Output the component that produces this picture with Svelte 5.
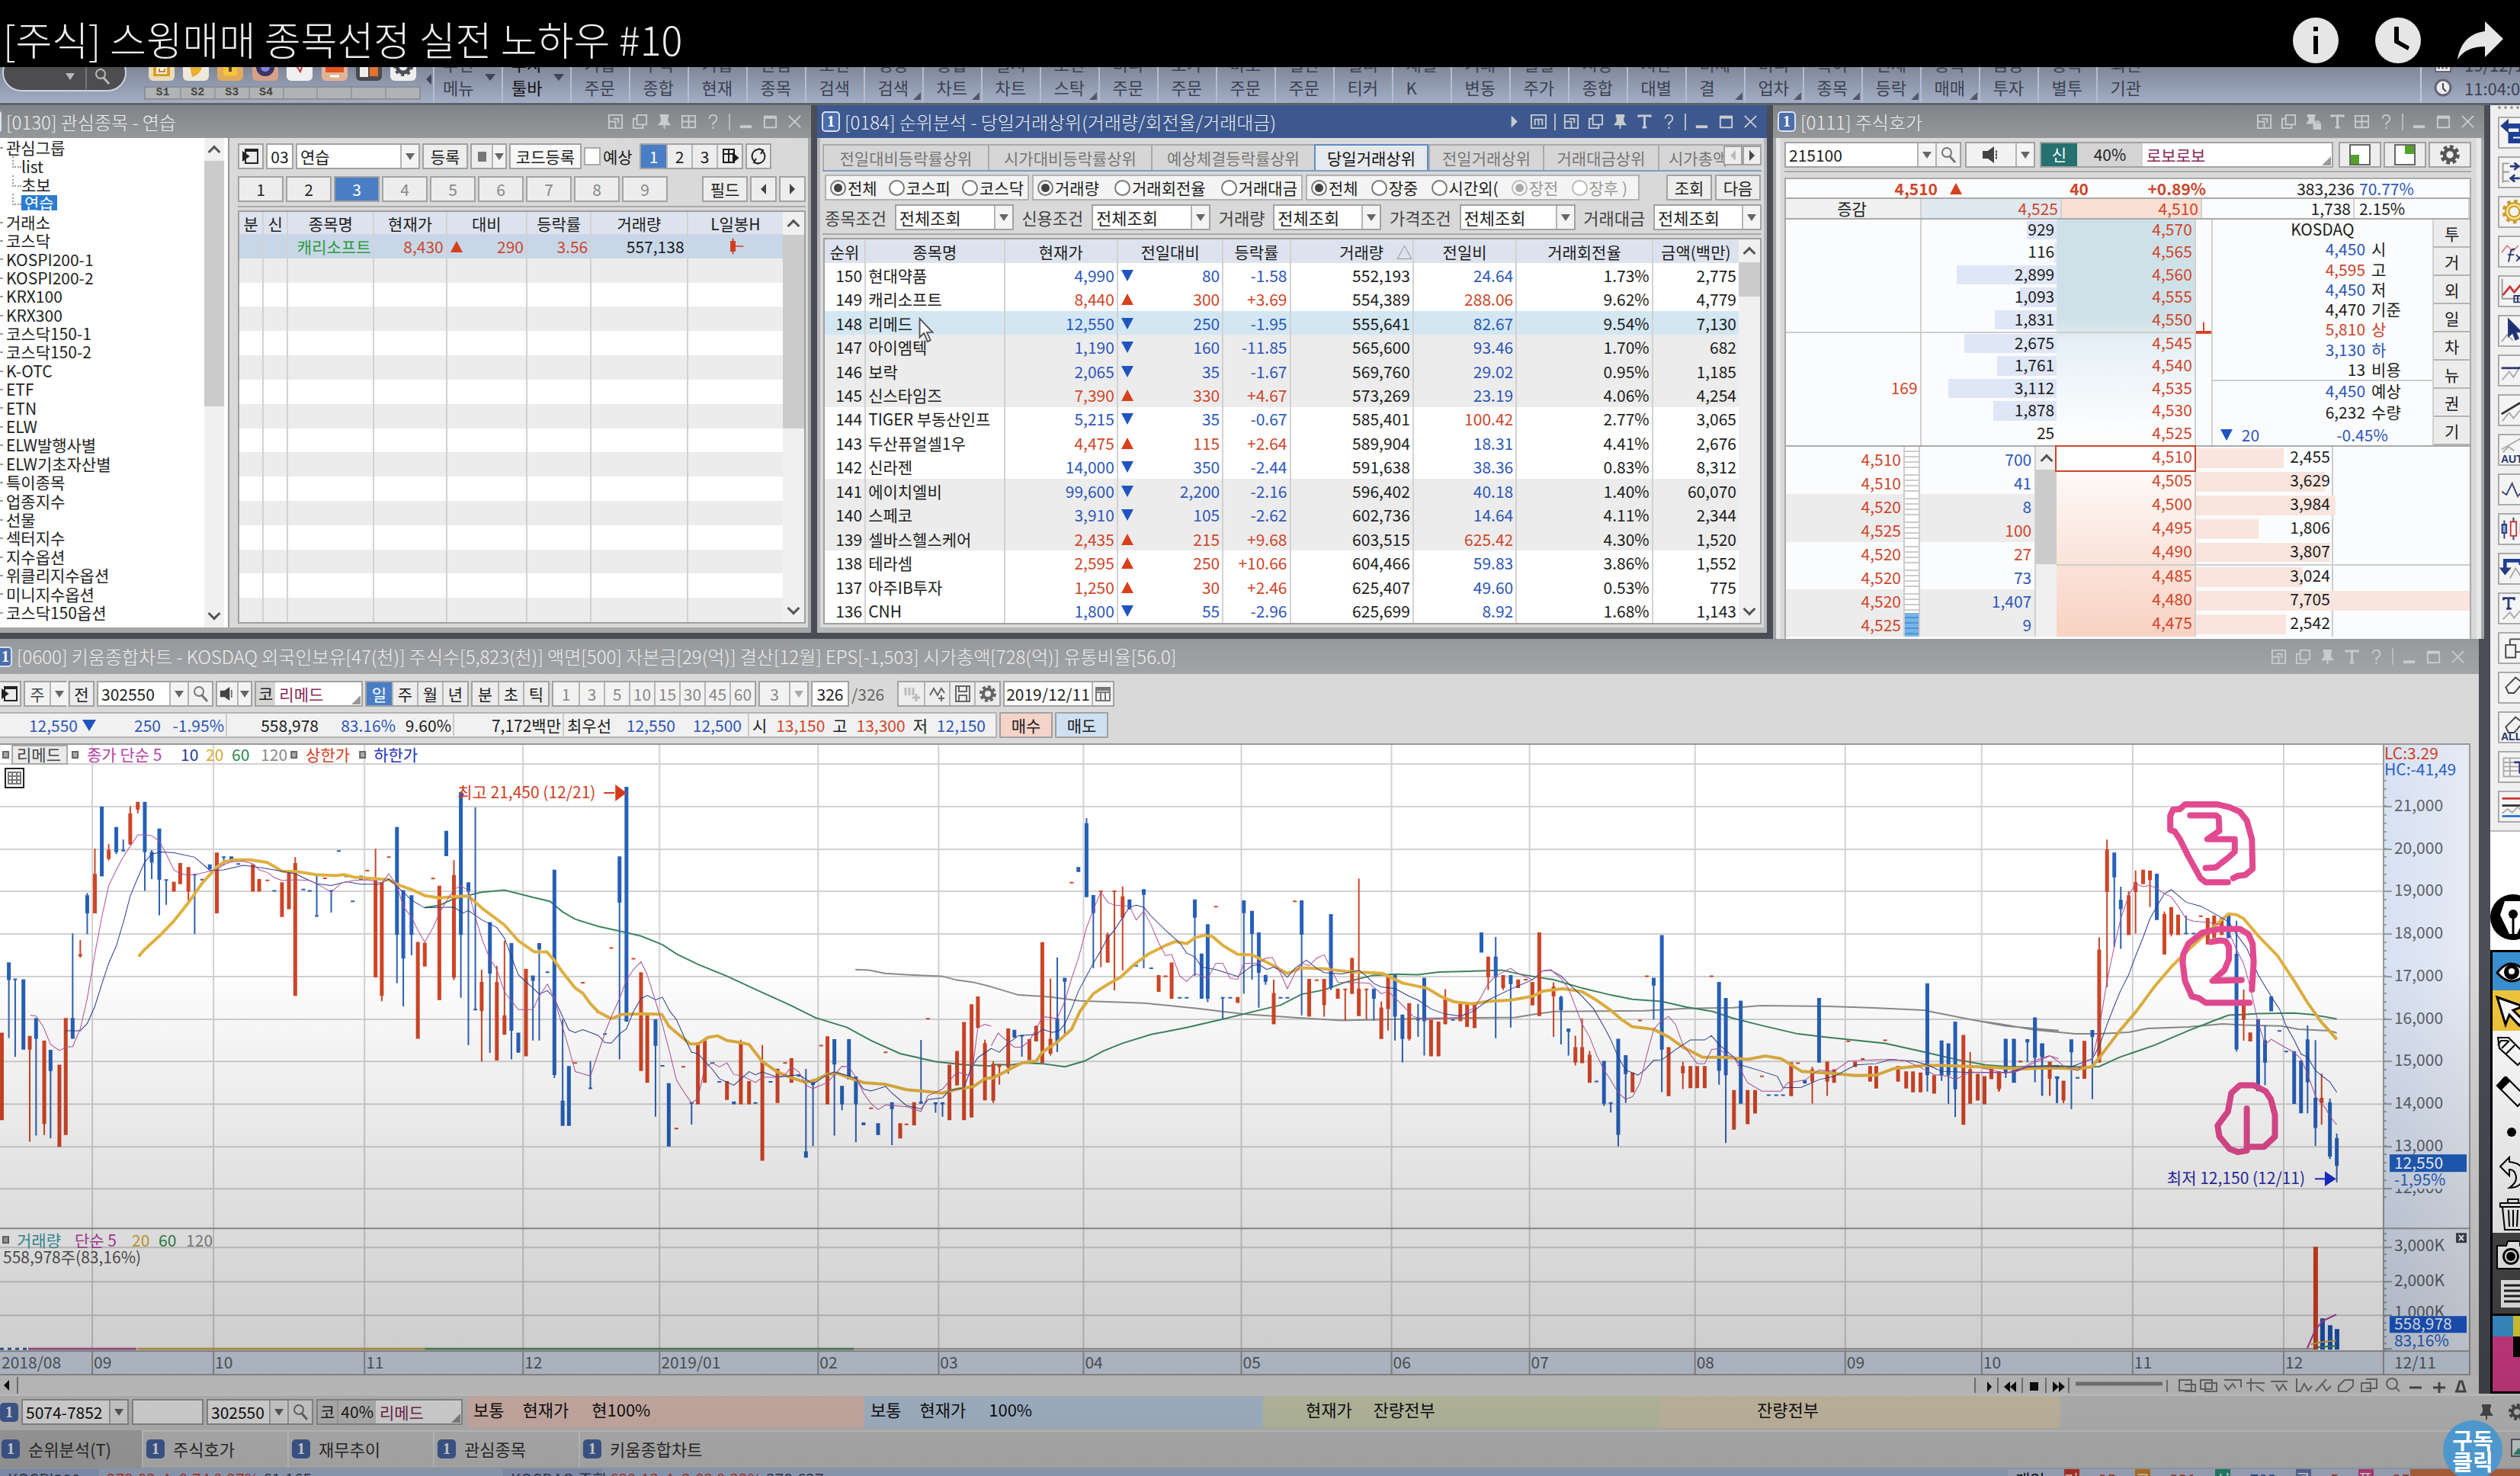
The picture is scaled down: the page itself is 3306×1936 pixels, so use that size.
<script>
  // ---------- quick menu ----------
  const quick = [
    ['기업', '주문'], ['주식', '종합'], ['기업', '현재'], ['관심', '종목'], ['조건', '검색'], ['영상', '검색', 1],
    ['종합', '차트', 1], ['실시', '차트'], ['조건', '스탁', 1], ['미니', '주문'], ['호가', '주문'], ['바로', '주문'],
    ['일반', '주문'], ['멀티', '티커'], ['채널', 'K'], ['거래', '변동'], ['일별', '주가'], ['시장', '종합'],
    ['시간', '대별'], ['미체', '결', 1], ['미니', '업차', 1], ['특이', '종목', 1], ['전체', '등락', 1],
    ['종목', '매매', 1], ['금융', '투자'], ['종목', '별투'], ['외인', '기관']
  ];
  const shortcuts = ['S1', 'S2', 'S3', 'S4', '', '', '', ''];

  // ---------- watch list ----------
  const tree = ['관심그룹', 'list', '초보', '연습', '거래소', '코스닥', 'KOSPI200-1', 'KOSPI200-2', 'KRX100', 'KRX300',
    '코스닥150-1', '코스닥150-2', 'K-OTC', 'ETF', 'ETN', 'ELW', 'ELW발행사별', 'ELW기초자산별', '특이종목', '업종지수',
    '선물', '섹터지수', '지수옵션', '위클리지수옵션', '미니지수옵션', '코스닥150옵션'];
  const blankRows = Array.from({ length: 15 });

  // ---------- volume ranking ----------
  const tabs = ['전일대비등락률상위', '시가대비등락률상위', '예상체결등락률상위', '당일거래상위', '전일거래상위', '거래대금상위', '시가총액'];
  const filters = ['종목조건', '신용조건', '거래량', '가격조건', '거래대금'];
  const ranks = [
    [150, '현대약품', '4,990', '80', '-1.58', '552,193', '24.64', '1.73%', '2,775'],
    [149, '캐리소프트', '8,440', '300', '+3.69', '554,389', '288.06', '9.62%', '4,779'],
    [148, '리메드', '12,550', '250', '-1.95', '555,641', '82.67', '9.54%', '7,130'],
    [147, '아이엠텍', '1,190', '160', '-11.85', '565,600', '93.46', '1.70%', '682'],
    [146, '보락', '2,065', '35', '-1.67', '569,760', '29.02', '0.95%', '1,185'],
    [145, '신스타임즈', '7,390', '330', '+4.67', '573,269', '23.19', '4.06%', '4,254'],
    [144, 'TIGER 부동산인프', '5,215', '35', '-0.67', '585,401', '100.42', '2.77%', '3,065'],
    [143, '두산퓨얼셀1우', '4,475', '115', '+2.64', '589,904', '18.31', '4.41%', '2,676'],
    [142, '신라젠', '14,000', '350', '-2.44', '591,638', '38.36', '0.83%', '8,312'],
    [141, '에이치엘비', '99,600', '2,200', '-2.16', '596,402', '40.18', '1.40%', '60,070'],
    [140, '스페코', '3,910', '105', '-2.62', '602,736', '14.64', '4.11%', '2,344'],
    [139, '셀바스헬스케어', '2,435', '215', '+9.68', '603,515', '625.42', '4.30%', '1,520'],
    [138, '테라셈', '2,595', '250', '+10.66', '604,466', '59.83', '3.86%', '1,552'],
    [137, '아주IB투자', '1,250', '30', '+2.46', '625,407', '49.60', '0.53%', '775'],
    [136, 'CNH', '1,800', '55', '-2.96', '625,699', '8.92', '1.68%', '1,143']
  ];

  // ---------- order book ----------
  const asks = [['929', '4,570', 22], ['116', '4,565', 2], ['2,899', '4,560', 74], ['1,093', '4,555', 27], ['1,831', '4,550', 46],
    ['2,675', '4,545', 68], ['1,761', '4,540', 44], ['3,112', '4,535', 80], ['1,878', '4,530', 47], ['25', '4,525', 0]];
  const bids = [['4,510', '2,455', 32], ['4,505', '3,629', 47], ['4,500', '3,984', 51], ['4,495', '1,806', 23], ['4,490', '3,807', 49],
    ['4,485', '3,024', 39], ['4,480', '7,705', 100], ['4,475', '2,542', 33]];
  const ticks = [['4,510', '700', 'dn'], ['4,510', '41', 'dn'], ['4,520', '8', 'dn'], ['4,525', '100', 'up'], ['4,520', '27', 'up'],
    ['4,520', '73', 'dn'], ['4,520', '1,407', 'dn'], ['4,525', '9', 'dn']];
  const info = [['4,450', '시', 'dn'], ['4,595', '고', 'up'], ['4,450', '저', 'dn'], ['4,470', '기준', ''], ['5,810', '상', 'up'], ['3,130', '하', 'dn'], ['13', '비용', '']];

  // ---------- chart ----------
  // Each segment keeps its own digitised units: position = origin + value / scale.
  const segments = [
    {
      ox: 0, oy: 1010, sx: 1.2062, sy: 2.9037,
      candles: '3 r 1003 1330;14 b 735 797 735 1020;24 b 797 797 797 1092;37 b 800 1062;47 r 1015 1062 1015 1415;57 b 947 1020 947 1392;70 r 1033 1345 1030 1390;80 b 1068 1143 1068 1402;94 r 1125 1432;104 r 947 1387;115 b 947 1020 622 1020;127 r 704 706 647 715;138 b 480 543 468 625;150 r 398 543 300 543;161 b 142 402;172 r 307 335 282 345;184 b 220 310 220 320;195 b 307 307 265 310;206 r 168 280 138 285;218 r 124 148 124 165;229 b 124 310 124 460;240 b 315 350 305 415;252 b 226 415 226 553;263 b 419 419 419 513;275 r 428 460;285 r 357 432;298 r 372 460 372 500;308 b 398 398 398 625;320 b 417;332 b 362 375;343 r 317 543;354 b 332 332 332 362;366 b 332 348;377 b 358;400 r 362 460;410 r 418 460;423 r 420;434 b 460;446 r 430 557;457 r 387 527;467 r 357 857 332 857;480 b 455;490 b 460;501 b 556 556 403 556;514 r 412;524 b 460 460 460 543;536 b 308;548 b 405;558 b 500;571 b 405 415;581 r 383;594 r 418 787 300 787;604 r 430 857 430 880;615 r 332;628 b 220 625 220 812;638 b 460 715 460 900;651 b 480 625 480 705;661 r 657 1020;672 r 660 745;685 r 413;695 r 443 873;706 b 234 325;718 r 403 788 343 800;729 b 87 625 87 867;741 b 430 460 430 1047;752 b 912 912 142 912;762 r 810 915 760 1110;775 b 582 772 582 1077;786 r 810 1103 745 1103;798 r 937 1005 650 1005;809 b 662 990 662 1102;820 b 1003 1073 1003 1077;832 r 760 1087;843 b 785 800 785 1030;853 b 662 680 662 1030;866 b 770;877 b 382 1158 382 1172;890 b 1262 1352 950 1352;900 b 1130 1352;910 r 1115;922 r 810;934 b 1212 1212 1108 1212;946 r 922;957 b 1005;967 r 678;980 b 332 502 332 1102;991 b 67 955;1002 r 718;1014 r 773 1143;1024 r 937 1188;1037 b 952 1047 952 1320;1048 b 1126;1058 b 1195 1430;1070 r 1365;1081 r 1130;1094 b 1268 1268 1268 1350;1104 r 1040 1270;1115 r 1033 1188;1127 b 1115;1138 b 1187;1150 r 1187 1253;1161 b 1265 1270;1172 r 1040 1270 1027 1270;1185 r 1187 1270;1195 b 1268;1206 r 1115 1485 1047 1485;1219 b 1187;1230 r 1140 1265;1242 r 1115;1252 r 1100 1188;1264 b 1165;1275 b 1455 1473 1138 1473;1286 b 1187 1197 1187 1432;1299 r 1049;1309 r 1017 1270;1320 b 1028 1118 1028 1392;1332 b 1205 1270 1205 1295;1343 b 1028 1175;1354 b 1170 1270 1170 1417;1366 b 1345 1350;1378 r 1288;1389 b 1348 1387;1401 r 1075;1411 b 1268 1288 1268 1428;1424 r 1348 1400;1434 r 1349;1446 r 1268 1350;1457 b 1265 1268 1028 1268;1468 r 947;1480 b 1268 1270 1268 1305;1491 b 1268 1270 1268 1320;1502 r 1125 1330;1514 r 1073 1198;1525 r 962 1330;1537 r 895 1320;1547 r 865 980;1558 r 1043 1255 1027 1255',
      ma5: '48,933 57,937 68,975 80,1045 94,1068 104,1055 115,1053 127,985 138,870 150,700 161,560 172,440 184,380 195,330 206,290 218,247 229,246 240,250 252,270 263,320 275,380 285,395 298,400 308,398 320,392 343,378 354,360 366,350 385,347 400,357 410,380 423,390 434,410 446,420 467,418 490,420 510,445 524,465 540,430 560,420 580,418 604,430 615,395 628,440 638,520 651,560 661,610 672,655 685,600 695,545 706,500 718,455 729,440 741,460 752,560 762,640 775,720 786,760 798,845 820,912 843,912 853,860 866,815 877,870 890,980 900,1060 910,1148 934,1165 946,1080 957,1000 967,940 980,870 991,800 1002,760 1014,730 1024,780 1037,880 1048,970 1060,1080 1070,1180 1083,1230 1094,1268 1104,1250 1115,1130 1127,1115 1138,1130 1150,1115 1161,1160 1172,1162 1195,1190 1206,1170 1230,1170 1242,1160 1252,1130 1264,1150 1275,1200 1286,1213 1309,1190 1320,1160 1332,1128 1343,1130 1354,1170 1366,1230 1378,1270 1389,1293 1401,1275 1434,1282 1457,1300 1468,1240 1491,1215 1514,1150 1537,1165 1547,980 1558,968 1568,975',
      ma10: '104,993 127,993 138,965 150,900 161,815 172,735 184,670 195,580 206,480 218,410 229,350 240,320 255,312 275,315 308,332 332,382 354,380 385,363 400,367 434,380 467,395 480,410 501,433 524,440 548,425 571,435 600,435 615,415 638,465 651,495 672,525 718,522 732,545 741,535 762,570 786,600 798,640 809,710 820,780 843,830 853,853 866,840 877,870 890,940 900,990 910,1000 922,988 946,1010 957,1038 967,1040 980,1005 991,985 1002,920 1014,870 1024,858 1037,875 1048,865 1060,920 1070,950 1083,1020 1094,1075 1104,1080 1127,1140 1138,1175 1161,1200 1185,1148 1195,1160 1206,1150 1230,1170 1264,1160 1286,1195 1309,1160 1320,1150 1343,1165 1354,1175 1366,1215 1378,1222 1401,1205 1411,1230 1434,1278 1457,1290 1468,1255 1491,1248 1502,1220 1525,1210 1537,1130 1547,1095 1568,1060',
      ma20: '219,710 228,685 252,632 275,575 298,505 320,430 343,370 354,350 370,342 395,342 423,352 446,385 470,387 500,398 530,402 545,398 560,408 600,415 615,418 628,435 651,455 672,478 695,487 720,482 741,480 762,525 798,590 820,650 845,692 865,692 877,725 890,770 910,830 922,850 934,890 946,920 967,947 985,930 1020,928 1047,930 1058,975 1080,1020 1092,1043 1104,1043 1120,1018 1135,1012 1150,1030 1170,1037 1185,1045 1206,1110 1230,1150 1250,1170 1275,1190 1290,1180 1309,1158 1325,1155 1343,1172 1366,1190 1401,1197 1434,1217 1470,1225 1491,1230 1514,1215 1540,1205 1558,1175 1568,1172',
      ma60: '672,523 695,515 718,490 762,465 798,457 843,485 870,500 890,540 910,568 946,595 980,613 1014,632 1048,665 1070,700 1104,740 1150,785 1206,847 1250,895 1290,943 1340,980 1378,1030 1424,1080 1480,1110 1525,1122 1568,1127',
      ma120: '1353,760 1375,762 1400,774 1440,780 1490,785 1514,800 1540,808 1568,825'
    },
    {
      ox: 1300, oy: 1050, sx: 1.12, sy: 3,
      candles: '3 r 1040 1178 1025 1190;12 r 1040 1045 1040 1118;25 r 900 1047 900 1075;34 b 905 930;45 b 925 925 925 1008;56 r 942 1018;66 r 890 945 885 945;75 r 560 1030;87 r 940 993 700 1003;97 b 860 945 617 990;108 b 700 710 700 925;118 r 323;128 b 265 278;140 b 92 377 70 377;150 b 375 440 375 660;161 r 357 357 357 655;171 r 530 635 520 635;181 r 357 357 357 747;193 r 380 458 338 668;203 b 392 425;213 b 650;224 b 352 368 352 660;235 b 660;246 r 690 750;256 r 691;265 r 640 777;277 b 776;287 b 776;299 b 392 458 392 690;309 b 605 777;318 b 490 777 490 793;330 r 418;340 b 776 776 776 860;351 b 776;362 r 776 793;371 b 396 440 396 760;383 b 437 522 437 705;393 b 522 675 522 815;403 b 690 710 685 725;415 r 760 877 705 877;425 b 776;435 b 776;446 r 397;456 b 396 525 396 845;467 r 705 847;478 r 707;489 r 705 802 705 850;499 b 450 735 450 745;509 r 743 777;520 r 743 743 743 865;530 r 622 758;540 r 743 845 307 845;551 r 743 743 743 862;562 b 743 777 743 865;573 r 817 935 790 935;583 r 690 817 690 905;593 b 690 847 690 945;604 b 845 935 845 1030;614 r 800 935 800 945;627 b 862 862 800 930;636 b 700 865 700 1003;646 r 865 1003;657 r 873 1003;667 r 785 877 742 877;678 b 863;689 r 800 865;699 r 805 888;710 r 805 892;720 b 522 595;730 r 617 692 617 745;741 b 617 692 537 935;752 r 690 735 690 745;763 b 690 720 690 893;774 r 707 735;785 r 705;795 r 717 803;805 r 522 845;826 r 735 768 715 930;837 b 775 822 768 960;848 b 900 907 900 1003;858 r 973 1028 925 1042;868 r 973 1030 857 1030;879 r 1003 1107 985 1107;889 b 1105;900 b 1027 1190 1027 1202;910 b 1190 1190 1190 1227;921 b 940 1312 940 1360;932 b 1005 1073 1005 1190;942 r 1073 1145;953 r 865;963 r 691;973 b 700 725 700 862;985 b 532 977 532 1147;995 r 973 1160;1016 r 1047 1070 1027 1135;1027 r 1047 1128;1037 r 1047 1128;1048 r 1047 1128;1058 r 691;1069 b 717 1060 717 1118;1079 b 780 1077 780 1347;1091 r 1142 1292;1101 b 790 1190;1111 r 1142 1270;1122 r 1142 1228;1132 r 1085;1142 b 1159;1153 b 1159;1163 b 1159;1175 r 1032 1160;1185 r 1033;1195 b 1103 1110;1206 r 1060 1103 1047 1192;1216 b 780 1028;1228 r 1030 1103 1027 1162;1238 r 1060 1107;1248 b 1078;1259 r 947;1269 r 1030 1045;1280 r 1017;1291 r 1047 1103;1300 r 1047 1130;1313 r 943;1332 r 1047 1103;1344 r 1068 1130;1354 r 1068 1145;1365 r 1073 1145;1375 b 722 1077 722 1145;1385 r 1083 1150;1396 b 947 1077 947 1103;1406 b 958 1078 958 1193;1416 b 873 1133 873 1245;1428 r 925 1272;1438 r 1060 1190 990 1190;1449 r 1078 1177;1459 r 1087 1192;1469 r 1060 1093;1480 r 1070 1132 1070 1145;1490 b 940 1070;1502 b 940 1107;1512 r 1027;1522 b 942 945 942 1030;1533 b 857 1008 857 1108;1544 b 958 1007 958 1162;1555 r 1030 1062 1030 1162;1566 b 1088 1092 1088 1190',
      ma5: '0,965 10,915 25,950 34,970 45,970 56,945 66,900 75,850 97,857 108,790 118,700 128,620 140,500 150,430 161,360 171,400 181,412 203,415 213,470 224,435 235,490 246,560 256,610 265,605 277,690 287,712 299,680 318,700 330,640 340,640 351,700 362,703 371,640 393,640 403,620 413,618 425,680 435,740 446,680 456,640 467,650 478,620 489,607 499,660 509,715 555,718 573,760 583,750 604,805 620,850 640,862 690,853 699,830 710,815 720,770 730,720 741,690 763,660 774,680 795,705 810,670 822,665 837,700 848,740 858,810 868,880 879,930 889,1000 900,1060 910,1100 921,1150 932,1175 942,1165 953,1110 963,1000 973,900 985,865 995,850 1005,880 1016,960 1027,1000 1037,1035 1048,1035 1058,980 1069,975 1079,1000 1091,1010 1101,1060 1111,1110 1132,1143 1160,1143 1170,1110 1195,1100 1216,1060 1238,1065 1259,1025 1291,1020 1325,1018 1344,1025 1365,1050 1385,1078 1406,1085 1416,1098 1438,1068 1480,1070 1502,1070 1512,1060 1533,1030 1555,1005 1568,1015',
      ma10: '0,975 12,990 25,955 40,925 66,920 75,900 90,912 100,905 108,880 118,820 128,750 140,690 150,640 161,590 171,540 181,510 193,460 203,420 213,412 224,420 235,455 256,510 277,560 287,600 299,615 309,655 330,665 362,692 383,650 393,645 405,665 415,655 425,670 435,695 446,660 463,628 478,660 489,677 515,682 540,668 551,690 562,720 573,733 593,740 614,770 627,785 646,820 667,840 689,848 699,840 710,825 730,785 763,742 795,705 810,670 822,668 837,690 848,720 868,770 885,820 900,890 910,940 921,1010 932,1060 950,1080 960,1060 973,1022 985,1020 1005,980 1027,942 1048,942 1058,925 1069,960 1091,1010 1101,1040 1132,1065 1155,1085 1163,1130 1190,1128 1216,1098 1238,1085 1270,1040 1300,1035 1320,1020 1355,1025 1375,1040 1396,1065 1438,1070 1500,1070 1522,1048 1568,1045',
      ma20: '0,1095 25,1060 45,1032 66,1025 75,990 97,950 118,900 130,830 150,760 170,725 190,695 210,645 230,605 256,570 270,555 287,563 299,540 313,530 325,535 340,570 362,605 383,607 400,630 415,650 435,680 456,658 489,662 520,672 575,680 604,718 640,738 660,770 680,792 705,800 730,790 763,785 795,770 810,750 840,740 868,752 889,785 910,825 925,860 942,890 973,900 995,930 1016,970 1045,1010 1075,1010 1111,1018 1137,1005 1160,1015 1190,1065 1230,1072 1270,1082 1300,1080 1325,1055 1370,1042 1396,1042 1450,1047 1500,1053 1568,1052',
      ma60: '0,1038 30,1040 50,1032 75,1035 108,1047 137,1025 165,985 193,955 235,920 287,893 345,857 393,825 425,805 456,762 489,745 520,715 560,688 593,683 627,685 657,675 700,672 750,667 780,685 826,705 868,738 910,765 942,782 985,790 1020,812 1060,830 1090,857 1132,885 1185,918 1230,932 1313,955 1375,992 1420,1020 1460,1040 1500,1048 1568,1043',
      ma120: '0,733 40,765 85,772 130,788 225,797 300,817 370,840 450,855 515,865 555,863 640,857 770,853 800,840 826,830 960,827 1020,818 1090,815 1130,807 1230,810 1290,815 1370,825 1430,857 1490,887 1568,905'
    },
    {
      ox: 2600, oy: 960, sx: 2.221, sy: 2.45,
      candles: '6 r 1110 1192;26 r 1083 1112;49 r 1093 1143 1093 1155;68 b 990 1078 990 1112;92 b 990 1125;110 r 1059;131 b 990 995 990 1060;153 b 920 1045 920 1125;173 b 1003 1040 1003 1168;196 r 1062 1112 1062 1168;216 b 1110 1110 1110 1193;236 r 1123 1182 1123 1193;259 b 990 1027 990 1212;277 b 1111;297 r 995 1112;320 b 960 978 960 1180;340 r 702 1060 660 1060;363 r 380 512 346 820;384 b 390 465 390 690;403 b 542 567 497 697;426 r 527 650 512 650;446 r 485 512 445 647;468 r 445 487;488 r 448 473 445 563;508 b 458 602;530 r 588 713 577 713;550 r 565 647 565 657;570 r 590 650;593 b 648 648 590 648;615 b 648;636 r 592;656 r 600 680;675 r 592 660;697 r 600 650;717 b 590 660;740 b 715 1018 607 1027;761 r 878 923 828 992;780 r 968 992;803 b 925 1152;823 b 993 1060 943 1135;841 b 852 895;865 b 961;885 b 1027;908 b 1028 1193;928 b 1058 1223;947 b 990 1123 943 1225;970 b 1178 1270 990 1330;988 r 1178 1190 1098 1262;1012 b 1192 1362 1178 1372;1032 b 1307 1392 1290 1447',
      ma5: '0,1080 60,1095 100,1090 131,1070 153,1055 196,1040 216,1055 236,1073 277,1088 297,1060 320,1050 335,980 345,920 363,800 384,690 403,600 426,525 446,487 468,497 488,493 508,503 530,520 550,530 570,560 593,600 615,608 656,612 697,620 717,640 740,700 761,745 780,820 800,920 823,1005 841,987 865,1003 908,1030 928,1050 947,1100 970,1170 1000,1210 1012,1235 1032,1262',
      ma10: '0,1095 80,1093 131,1075 196,1075 260,1075 320,1050 340,1010 363,940 384,880 403,830 426,780 446,720 468,660 488,600 508,560 530,520 550,507 593,547 636,560 675,583 717,610 740,650 770,695 803,780 841,850 865,890 885,945 908,990 928,1035 947,1045 970,1088 1012,1125 1032,1158',
      ma20: '0,1075 100,1083 200,1078 280,1083 320,1075 345,1040 400,960 450,895 500,820 550,755 600,700 650,650 690,610 717,585 740,587 761,600 803,655 860,720 908,800 947,870 985,930 1010,960 1032,988',
      ma60: '0,1070 100,1077 200,1072 300,1077 340,1075 400,1045 500,1007 600,960 680,925 717,910 761,908 803,905 908,903 960,908 1032,922',
      ma120: '0,930 60,940 150,957 270,970 340,970 426,965 480,953 600,948 700,938 761,942 870,945 920,955 1010,960 1032,967'
    }
  ];
  const fx = (s, x) => Math.round((s.ox + x / s.sx) * 10) / 10;
  const fy = (s, y) => Math.round((s.oy + y / s.sy) * 10) / 10;
  const line = (key) => segments.map((s) => 'M' + s[key].split(' ').map((p) => {
    const [x, y] = p.split(',').map(Number);
    return fx(s, x) + ' ' + fy(s, y);
  }).join('L')).join('');
  const paths = { r: { body: '', wick: '' }, b: { body: '', wick: '' } };
  for (const s of segments) {
    for (const c of s.candles.split(';')) {
      const [x, k, ...v] = c.split(' ');
      const [top, bot = top, hi, lo] = v.map(Number);
      const px = fx(s, +x);
      paths[k].body += `M${px} ${fy(s, top) - 1}V${fy(s, bot) + 1}`;
      if (hi !== undefined) paths[k].wick += `M${px} ${fy(s, hi)}V${fy(s, lo)}`;
    }
  }
  const pen = (d) => d.split('|').map((part) => 'M' + part.split(' ').map((p) => {
    const [x, y] = p.split(',').map(Number);
    return fx(segments[2], x) + ' ' + fy(segments[2], y);
  }).join('L')).join('');
  const marks = pen('715,483 650,483 635,470 600,400 575,345 560,320 547,315 547,270 555,250 575,248 590,233 685,233 720,242 750,257 770,285 785,345 787,440 765,460 745,462 730,470|605,268 680,268 688,275 690,318 655,345 735,345 735,385 715,405 695,422 680,435 650,437|778,870 650,870 630,855 610,850 590,800 583,740 585,715 600,680 640,645 690,633 750,633 775,650 787,680 790,740 785,828|665,675 690,670 708,672 718,690 718,730 705,765 670,800 755,797|770,1345 745,1350 720,1340 690,1300 685,1265 715,1220 725,1160 750,1135 790,1135 825,1155 840,1180 852,1230 852,1300 820,1333 775,1333|770,1210 770,1335');

  const months = [['2018/08', 0], ['09', 121], ['10', 280], ['11', 478], ['12', 686], ['2019/01', 865], ['02', 1073], ['03', 1231],
    ['04', 1421], ['05', 1628], ['06', 1825], ['07', 2006], ['08', 2223], ['09', 2420], ['10', 2599], ['11', 2797], ['12', 2995]];
  const prices = ['21,000', '20,000', '19,000', '18,000', '17,000', '16,000', '15,000', '14,000', '13,000', '12,000']
    .map((t, i) => [t, Math.round(1058 + i * 55.7)]);
  const minor = Array.from({ length: 50 }, (_, i) => Math.round(1024 + i * 11.14));
  const volMinor = Array.from({ length: 18 }, (_, i) => 1618 + i * 9);

  const periods = ['일', '주', '월', '년'];
  const minutes = ['1', '3', '5', '10', '15', '30', '45', '60'];
  const dock = ['순위분석(T)', '주식호가', '재무추이', '관심종목', '키움종합차트'];
  const sideTools = ['arrow', 'swap', 'gear', 'fx', 'wave', 'cursor', 'hline', 'trend', 'auto', 'zig', 'candle', 'turn', 'text', 'copy', 'erase', 'all', 'memo', 'lines'];
</script>

{#snippet ico(name)}
  <svg class="ico" viewBox="0 0 24 24" fill="none" stroke="currentColor" stroke-width="2" aria-hidden="true">
    {#if name === 'layout'}<path d="M3 3h18v18H3zM3 12h9v9" /><path d="M9 8h7v6" />
    {:else if name === 'copy'}<path d="M8 3h13v13H8zM8 8H3v13h13v-5" />
    {:else if name === 'pin'}<path d="M7 3h10v2h-1v7l3 4H5l3-4V5H7zM12 16v6" fill="currentColor" />
    {:else if name === 'pinlock'}<path d="M5 3h9v2h-1v6l2 3H4l3-4V5H5z" fill="currentColor" /><path d="M13 15h9v7h-9z" fill="currentColor" /><path d="M15 15v-3h5v3" />
    {:else if name === 'T'}<path d="M4 6V4h16v2M12 4v16M9 20h6" stroke-width="3" />
    {:else if name === 'grid'}<path d="M3 4h18v16H3zM12 4v16M3 12h18" />
    {:else if name === 'q'}<path d="M7 8q0-5 5-5t5 5q0 3-5 6v3M12 19v3" />
    {:else if name === 'min'}<path d="M4 19h16" stroke-width="4" />
    {:else if name === 'max'}<path d="M4 5h16v15H4z" /><path d="M4 6h16" stroke-width="4" />
    {:else if name === 'x'}<path d="M4 4l16 16M20 4L4 20" />
    {:else if name === 'm'}<path d="M2 3h20v18H2zM7 17V9h10v8M12 9v8" />
    {:else if name === 'play'}<path d="M9 6l6 6-6 6z" fill="currentColor" />
    {:else if name === 'search'}<circle cx="10" cy="9" r="6" /><path d="M14 14l7 8" stroke-width="3" />
    {:else if name === 'speaker'}<path d="M2 8h6l7-5v18l-7-5H2z" fill="currentColor" /><path d="M18 8h2M18 12h2M18 16h2" stroke-width="3" />
    {:else if name === 'gear'}<circle cx="12" cy="12" r="6" stroke-width="4" /><circle cx="12" cy="12" r="9" stroke-width="4" stroke-dasharray="4 3" />
    {:else if name === 'panel'}<path d="M5 3h16v18H5zM5 5h16" /><path d="M2 7l7 5-7 5z" fill="currentColor" />
    {:else if name === 'gridnext'}<path d="M3 3h14v17H3zM10 3v17M3 9h14" /><path d="M16 9l6 5-6 5z" fill="currentColor" />
    {:else if name === 'refresh'}<path d="M17 4a9 9 0 0 0-11 14M7 20a9 9 0 0 0 11-14M12 2l6 2-3 5M12 22l-6-2 3-5" />
    {:else if name === 'save'}<path d="M3 2h18v20H3zM7 2v7h10V2M7 22v-8h10v8" />
    {:else if name === 'cal'}<path d="M3 4h18v17H3zM3 10h18M9 10v11M15 10v11" /><path d="M3 6h18" stroke-width="4" />
    {:else if name === 'bars'}<path d="M4 4v10M9 4v10M14 4v10M18 12v10M13 17h10" stroke="#bbb" stroke-width="3" />
    {:else if name === 'add'}<path d="M2 14l5-9 5 9 5-9 4 6M17 14v8M13 18h8" />
    {/if}
  </svg>
{/snippet}

{#snippet frameIcons(list)}
  <span class="frame-icons">
    {#each list as n}{#if n === '|'}<i class="bar"></i>{:else}<button aria-label={n}>{@render ico(n)}</button>{/if}{/each}
  </span>
{/snippet}

{#snippet arrow()}<span class="arr" aria-hidden="true"><i></i></span>{/snippet}

<div class="page">
  <header class="video">
    <h1>[주식] 스윙매매 종목선정 실전 노하우 #10</h1>
    <div class="video-actions">
      <button aria-label="정보"><svg viewBox="0 0 60 60"><circle cx="30" cy="30" r="30" fill="#e6e6e6" /><path d="M27 12h6v6h-6zM27 24h6v24h-6z" fill="#000" /></svg></button>
      <button aria-label="나중에 볼 동영상"><svg viewBox="0 0 60 60"><circle cx="30" cy="30" r="30" fill="#e6e6e6" /><path d="M25 12v21l18 10 2-5-14-8V12z" fill="#000" /></svg></button>
      <button aria-label="공유"><svg viewBox="0 0 60 60"><path d="M36 5l24 23-24 24V38C20 38 8 43 0 55 3 38 12 21 36 18z" fill="#e6e6e6" /></svg></button>
    </div>
  </header>

  <nav class="ribbon">
    <div class="pill">{@render arrow()}<i></i>{@render ico('search')}</div>
    <div class="launch">
      <div class="tiles">
        <svg viewBox="0 0 34 34"><rect width="34" height="34" rx="6" fill="#e9dcb8" /><path d="M6 4h22v24H6z" fill="#dc9a2c" /><path d="M10 16h14v9H10z" fill="#fff3cf" /><path d="M14 18v4h7v-4" stroke="#a86" stroke-width="2" fill="none" /></svg>
        <svg viewBox="0 0 34 34"><rect width="34" height="34" rx="6" fill="#efe9da" /><path d="M8 10q14-8 18 2-2 14-14 17z" fill="#e8b02e" /></svg>
        <svg viewBox="0 0 34 34"><rect width="34" height="34" rx="6" fill="#e2ab5c" /><path d="M8 10h18v17H8z" fill="#f3c63c" /><path d="M17 15v7" stroke="#543" stroke-width="4" /></svg>
        <svg viewBox="0 0 34 34"><rect width="34" height="34" rx="6" fill="#d8a088" /><circle cx="17" cy="16" r="12" fill="#3a3566" /><circle cx="17" cy="16" r="6" fill="#8a84d8" /></svg>
        <svg viewBox="0 0 34 34"><rect width="34" height="34" rx="6" fill="#f0f0f0" /><path d="M10 10l8 12 4-12" stroke="#c33" stroke-width="2" fill="none" /></svg>
        <svg viewBox="0 0 34 34"><rect width="34" height="34" rx="6" fill="#e0b498" /><path d="M5 6h24v17H5z" fill="#e2531f" /><path d="M11 28h12" stroke="#fff" stroke-width="3" /></svg>
        <svg viewBox="0 0 34 34"><rect width="34" height="34" rx="6" fill="#4a4a4e" /><path d="M5 15h11v14H5z" fill="#eee" /><path d="M18 6h11v22H18z" fill="#e2722c" /></svg>
        <svg viewBox="0 0 34 34"><rect width="34" height="34" rx="6" fill="#eee" /><circle cx="17" cy="15" r="8" fill="none" stroke="#4a4f5a" stroke-width="5" /><circle cx="17" cy="15" r="11" fill="none" stroke="#4a4f5a" stroke-width="4" stroke-dasharray="4 4" /></svg>
      </div>
      <div class="slots">{#each shortcuts as s}<span>{s}</span>{/each}</div>
    </div>
    <i class="back"></i>
    <a class="qm wide" href="#menu"><span>추천</span><span>메뉴</span><i class="down"></i></a>
    <a class="qm wide strong" href="#bar"><span>투자</span><span>툴바</span><i class="down"></i></a>
    {#each quick as q}
      <a class="qm" href="#quick"><span>{q[0]}</span><span>{q[1]}</span>{#if q[2]}<i class="corner"></i>{/if}</a>
    {/each}
    <div class="clock">
      <span><svg class="ico" viewBox="0 0 24 24"><path d="M2 2h20v20H2z" fill="#eee" stroke="#667" stroke-width="2" /><path d="M5 13h14M5 17h14" stroke="#778" stroke-width="3" stroke-dasharray="3 2" /></svg>19/12/11</span>
      <span><svg class="ico" viewBox="0 0 24 24"><circle cx="12" cy="12" r="10" fill="#eee" stroke="#667" stroke-width="3" /><path d="M12 6v7l4 4" stroke="#445" stroke-width="2" fill="none" /></svg>11:04:00</span>
    </div>
  </nav>

  <div class="desk">
    <main class="work">
      <div class="top-windows">
        <!-- watch list -->
        <section class="win">
          <div class="caption first"><b class="one"></b><span>[0130] 관심종목 - 연습</span>{@render frameIcons(['layout', 'copy', 'pin', 'grid', 'q', '|', 'min', 'max', 'x'])}</div>
          <div class="watch">
            <ul class="tree">
              {#each tree as t, i}<li class:child={i > 0 && i < 4}><a class:sel={i === 3} href="#group">{t}</a></li>{/each}
            </ul>
            <div class="scroll tree-scroll"><b></b></div>
            <div class="watch-main">
              <div class="row tools1">
                <button class="btn" aria-label="패널">{@render ico('panel')}</button>
                <input class="field" aria-label="그룹 번호" value="03" />
                <span class="combo"><select aria-label="그룹"><option>연습</option></select>{@render arrow()}</span>
                <button class="btn">등록</button>
                <button class="btn sq" aria-label="표시"><i></i>{@render arrow()}</button>
                <button class="btn white">코드등록</button>
                <label class="chk"><input type="checkbox" />예상</label>
                <span class="seg"><button class="on">1</button><button>2</button><button>3</button><button aria-label="다음">{@render ico('gridnext')}</button></span>
                <button class="btn" aria-label="새로고침">{@render ico('refresh')}</button>
              </div>
              <div class="row tools2">
                {#each [1, 2, 3, 4, 5, 6, 7, 8, 9] as n}<button class="btn" class:blue={n === 3} class:dim={n > 3}>{n}</button>{/each}
                <i></i>
                <button class="btn">필드</button>
                <button class="btn nav prev" aria-label="이전"><i></i></button>
                <button class="btn nav next" aria-label="다음"><i></i></button>
              </div>
              <div class="tbl-box">
                <table class="wt">
                  <thead><tr><th>분</th><th>신</th><th>종목명</th><th>현재가</th><th>대비</th><th>등락률</th><th>거래량</th><th>L일봉H</th></tr></thead>
                  <tbody>
                    <tr class="hot"><td></td><td></td><td class="green">캐리소프트</td><td class="up">8,430</td><td class="up"><i class="tri u"></i>290</td><td class="up">3.56</td><td>557,138</td>
                      <td class="mini"><svg viewBox="0 0 60 30"><path d="M24 15h18M26 3v24" stroke="#d43c1c" stroke-width="2" /><path d="M26 7v16" stroke="#d43c1c" stroke-width="8" /></svg></td></tr>
                    {#each blankRows as _, i}<tr class:odd={i % 2 === 0}><td></td><td></td><td></td><td></td><td></td><td></td><td></td><td></td></tr>{/each}
                  </tbody>
                </table>
                <div class="scroll w-scroll"><b></b></div>
              </div>
            </div>
          </div>
        </section>

        <!-- ranking -->
        <section class="win active">
          <div class="caption"><b class="one">1</b><span>[0184] 순위분석 - 당일거래상위(거래량/회전율/거래대금)</span>{@render frameIcons(['play', 'm', '|', 'layout', 'copy', 'pin', 'T', 'q', '|', 'min', 'max', 'x'])}</div>
          <div class="rank">
            <div class="tabs">
              {#each tabs as t, i}<button class:on={i === 3}>{t}</button>{/each}
              <span class="pager"><button class="btn nav prev off" aria-label="이전"><i></i></button><button class="btn nav next" aria-label="다음"><i></i></button></span>
            </div>
            <div class="row radios">
              <fieldset><label><input type="radio" name="mk" checked />전체</label><label><input type="radio" name="mk" />코스피</label><label><input type="radio" name="mk" />코스닥</label></fieldset>
              <fieldset><label><input type="radio" name="vol" checked />거래량</label><label><input type="radio" name="vol" />거래회전율</label><label><input type="radio" name="vol" />거래대금</label></fieldset>
              <fieldset><label><input type="radio" name="ses" checked />전체</label><label><input type="radio" name="ses" />장중</label><label><input type="radio" name="ses" />시간외(</label><label class="off"><input type="radio" name="ah" checked disabled />장전</label><label class="off"><input type="radio" name="ah" disabled />장후 )</label></fieldset>
              <i></i>
              <button class="btn">조회</button>
              <button class="btn">다음</button>
            </div>
            <div class="row selects">
              {#each filters as f, i}
                <label for="f{i}">{f}</label>
                <span class="combo"><select id="f{i}"><option>전체조회</option></select>{@render arrow()}</span>
              {/each}
            </div>
            <div class="tbl-box rbox">
              <table class="rt">
                <thead><tr><th>순위</th><th>종목명</th><th>현재가</th><th>전일대비</th><th>등락률</th><th>거래량 <em>△</em></th><th>전일비</th><th>거래회전율</th><th>금액(백만)</th></tr></thead>
                <tbody>
                  {#each ranks as r, i}
                    {@const c = r[4][0] === '+' ? 'up' : 'dn'}
                    <tr class:odd={(i > 2 && i < 6) || (i > 8 && i < 12)} class:cur={i === 2}>
                      <td>{r[0]}</td><td class="name">{r[1]}</td><td class={c}>{r[2]}</td>
                      <td class={c}><i class="tri {c === 'up' ? 'u' : 'd'}"></i>{r[3]}</td><td class={c}>{r[4]}</td><td>{r[5]}</td>
                      <td class={parseFloat(r[6]) > 100 ? 'up' : 'dn'}>{r[6]}</td><td>{r[7]}</td><td>{r[8]}</td>
                    </tr>
                  {/each}
                </tbody>
              </table>
              <div class="scroll r-scroll"><b></b></div>
              <svg class="pointer" viewBox="0 0 24 36"><path d="M2 2v26l6-6 5 12 4-2-5-11h8z" fill="#fff" stroke="#555" stroke-width="2" /></svg>
            </div>
          </div>
        </section>

        <!-- order book -->
        <section class="win">
          <div class="caption"><b class="one">1</b><span>[0111] 주식호가</span>{@render frameIcons(['layout', 'copy', 'pinlock', 'T', 'grid', 'q', '|', 'min', 'max', 'x'])}</div>
          <div class="book">
            <div class="row btools">
              <span class="combo"><input aria-label="종목코드" value="215100" />{@render arrow()}<button aria-label="검색">{@render ico('search')}</button></span>
              <span class="combo spk"><button aria-label="음성">{@render ico('speaker')}</button>{@render arrow()}</span>
              <span class="namebox"><b>신</b><em>40%</em><span>로보로보</span><i></i></span>
              <button class="btn" aria-label="왼쪽 배치"><svg class="ico big" viewBox="0 0 30 30"><path d="M2 2h26v26H2z" fill="#fff" stroke="#666" stroke-width="2" /><path d="M3 15h11v12H3z" fill="#54a22c" /></svg></button>
              <button class="btn" aria-label="오른쪽 배치"><svg class="ico big" viewBox="0 0 30 30"><path d="M2 2h26v26H2z" fill="#fff" stroke="#666" stroke-width="2" /><path d="M15 3h12v11H15z" fill="#54a22c" /></svg></button>
              <button class="btn gearb" aria-label="설정">{@render ico('gear')}</button>
            </div>
            <div class="hoga">
              <div class="h1 up"><b>4,510</b><i class="tri u"></i><b>40</b><b>+0.89%</b><span class="blk">383,236</span><span class="dn l">70.77%</span></div>
              <div class="h2"><span>증감</span><span class="up ba">4,525</span><span class="up bb">4,510</span><span>1,738</span><span class="l">2.15%</span></div>
              <div class="asks">
                <div class="c chg">{#each asks as a, i}<span class="up" class:mid={i === 5}>{i === 7 ? '169' : ''}</span>{/each}</div>
                <div class="c qty">{#each asks as a, i}<span class:mid={i === 5}><i style="width:{a[2]}%"></i><em>{a[0]}</em></span>{/each}</div>
                <div class="c prc">{#each asks as a, i}<span class="up" class:mid={i === 5}>{a[1]}</span>{/each}</div>
                <div class="c bar"><svg viewBox="0 0 22 298"><path d="M11 134v14M0 148h22" stroke="#d43c1c" stroke-width="2" /><path d="M0 149h22" stroke="#d43c1c" stroke-width="4" /></svg></div>
                <div class="c inf">
                  <div class="i1"><span class="ks">KOSDAQ</span>{#each info as n}<span><b class={n[2]}>{n[0]}</b><em class={n[1] === '상' || n[1] === '하' ? n[2] : ''}>{n[1]}</em></span>{/each}</div>
                  <div class="i2"><span><b class="dn">4,450</b><em>예상</em></span><span><b>6,232</b><em>수량</em></span><span class="dn last"><i class="tri d"></i><em>20</em><b>-0.45%</b></span></div>
                </div>
                <div class="c side">{#each ['투', '거', '외', '일', '차', '뉴', '권', '기'] as s}<button>{s}</button>{/each}</div>
              </div>
              <div class="bids">
                <div class="c tk">{#each ticks as t, i}<span class:odd={i === 2 || i === 3 || i > 5}><b class="up">{t[0]}</b><i class:fill={i === 7}></i><em class={t[2]}>{t[1]}</em></span>{/each}</div>
                <div class="scroll b-scroll"><b></b></div>
                <div class="c prc">{#each bids as b, i}<span class="up" class:mid={i === 5} class:now={i === 0}>{b[0]}</span>{/each}</div>
                <div class="c bq">{#each bids as b, i}<span class:mid={i === 5}><i style="width:{b[2]}%"></i><em>{b[1]}</em></span>{/each}</div>
              </div>
            </div>
          </div>
        </section>
      </div>

      <!-- chart -->
      <section class="win chart">
        <div class="caption"><b class="one cut">1</b><span>[0600] 키움종합차트 - KOSDAQ 외국인보유[47(천)] 주식수[5,823(천)] 액면[500] 자본금[29(억)] 결산[12월] EPS[-1,503] 시가총액[728(억)] 유통비율[56.0]</span>{@render frameIcons(['layout', 'copy', 'pin', 'T', 'q', '|', 'min', 'max', 'x'])}</div>
        <div class="row ctools">
          <button class="btn w28" aria-label="패널">{@render ico('panel')}</button>
          <span class="combo w56"><button>주</button>{@render arrow()}</span>
          <button class="btn w34">전</button>
          <span class="combo w153"><input aria-label="종목" value="302550" />{@render arrow()}<button aria-label="검색">{@render ico('search')}</button></span>
          <span class="combo w48"><button aria-label="음성">{@render ico('speaker')}</button>{@render arrow()}</span>
          <span class="namebox w142"><em>코</em><span>리메드</span><i></i></span>
          <span class="seg w33">{#each periods as p, i}<button class:on={i === 0}>{p}</button>{/each}</span>
          <span class="seg w33"><button>분</button><button>초</button><button>틱</button></span>
          <span class="seg w33 dim">{#each minutes as m}<button>{m}</button>{/each}</span>
          <span class="combo w66 dim"><button>3</button>{@render arrow()}</span>
          <input class="field w50" aria-label="봉 개수" value="326" /><span class="total">/326</span>
          <span class="seg w33 picts"><button aria-label="비교">{@render ico('bars')}</button><button aria-label="지표">{@render ico('add')}</button><button aria-label="저장">{@render ico('save')}</button><button aria-label="설정">{@render ico('gear')}</button></span>
          <span class="combo date"><input aria-label="날짜" value="2019/12/11" /><button aria-label="달력">{@render ico('cal')}</button></span>
        </div>
        <div class="row quote">
          <div class="strip">
            <b class="dn q1">12,550</b><i class="tri d"></i><b class="dn q2">250</b><b class="dn q3">-1.95%</b><i class="sp"></i>
            <b class="q4">558,978</b><b class="dn q5">83.16%</b><b class="q6">9.60%</b><i class="sp"></i>
            <b class="q7">7,172백만</b><i class="sp"></i><span>최우선</span><b class="dn q8">12,550</b><b class="dn q9">12,500</b><i class="sp gap"></i>
            <span>시</span><b class="up q10">13,150</b><span>고</span><b class="up q10">13,300</b><span>저</span><b class="dn q10">12,150</b>
          </div>
          <button class="btn buy">매수</button><button class="btn sell">매도</button>
        </div>
        <div class="plot-box">
          <svg class="plot" viewBox="0 975 3240 830" role="img" aria-label="리메드 일봉 차트">
            <defs>
              <linearGradient id="ax" x1="0" x2="1" y1="0" y2="0"><stop offset="0" stop-color="#d6e1f2" /><stop offset="1" stop-color="#e6ebf5" /></linearGradient>
              <clipPath id="below"><rect x="3126" y="1559" width="114" height="20" /></clipPath>
              <clipPath id="above"><rect x="3126" y="1705" width="114" height="21" /></clipPath>
            </defs>
            <rect x="0" y="975" width="3240" height="830" fill="#fff" />
            <rect x="3126" y="975" width="114" height="798" fill="url(#ax)" />
            <rect x="0" y="1773" width="3240" height="31" fill="#d3deed" />
            <g stroke="#d2d2d2" stroke-width="2">
              <path d="M0 1002H3126" />
              {#each prices as p}<path d="M0 {p[1]}H3126" />{/each}
              {#each [1636, 1681, 1725] as y}<path d="M0 {y}H3126" />{/each}
              {#each months.slice(1) as m}<path d="M{m[1]} 975V1773" />{/each}
            </g>
            <g stroke="#999" stroke-width="2" fill="none">
              <path d="M0 976H3240M3126 975V1804M0 1611H3240M0 1772H3240M0 1803H3240M3239 975V1804" />
              {#each months.slice(1) as m}<path d="M{m[1]} 1773V1803" />{/each}
              {#each prices as p}<path d="M3126 {p[1]}h11" />{/each}
              {#each [1636, 1681, 1725, 1769] as y}<path d="M3126 {y}h11" />{/each}
              {#each minor as y}<path d="M3126 {y}h4" />{/each}
              {#each volMinor as y}<path d="M3126 {y}h4" />{/each}
            </g>
            <path d={line('ma120')} stroke="#8c8c8c" stroke-width="2" fill="none" />
            <path d={line('ma60')} stroke="#3f8560" stroke-width="2" fill="none" />
            <path d={paths.r.wick} stroke="#c8462a" stroke-width="2" />
            <path d={paths.b.wick} stroke="#2f62b0" stroke-width="2" />
            <path d={paths.r.body} stroke="#cf4526" stroke-width="5" />
            <path d={paths.b.body} stroke="#2660b8" stroke-width="5" />
            <path d={line('ma20')} stroke="#dfb040" stroke-width="4" fill="none" stroke-linejoin="round" />
            <path d={line('ma10')} stroke="#2b3c8e" stroke-width="1" fill="none" />
            <path d={line('ma5')} stroke="#b0509c" stroke-width="1" fill="none" />

            <g stroke-width="3"><path d="M0 1769H37" stroke="#3a60a8" stroke-dasharray="5 5" /><path d="M37 1769H179" stroke="#b0609a" /><path d="M180 1769H557" stroke="#c8ac60" /><path d="M557 1769H1120" stroke="#5f9570" /><path d="M1120 1769H3040" stroke="#999" stroke-width="2" /></g>
            <path d="M3037 1635V1770" stroke="#d4411e" stroke-width="6" />
            <path d="M3046 1729V1770M3056 1738V1770M3065 1743V1770" stroke="#1c55b8" stroke-width="6" />
            <path d="M3026 1768L3037 1743 3047 1732 3064 1724" stroke="#b0409a" stroke-width="2" fill="none" />
            <path d="M3031 1763L3045 1760 3064 1758" stroke="#d0a840" stroke-width="2" fill="none" />
            <path d="M3038 1767L3064 1765" stroke="#2f9060" stroke-width="2" fill="none" />

            <g class="ct">
              <g fill="#aaa" stroke="#666" stroke-width="2"><path d="M4 986h7v8H4zM95 986h7v8h-7zM382 986h7v8h-7zM472 986h7v8h-7zM4 1622h7v8H4z" /></g>
              <rect x="16" y="978" width="72" height="24" fill="#eaeaea" stroke="#aaa" stroke-width="2" />
              <text x="22" y="998" fill="#444">리메드</text>
              <text x="114" y="998" fill="#b73fa6">종가 단순 5</text><text x="237" y="998" fill="#27389a">10</text><text x="270" y="998" fill="#d9a92c">20</text>
              <text x="304" y="998" fill="#2d8a4e">60</text><text x="342" y="998" fill="#888">120</text><text x="401" y="998" fill="#d43c1c">상한가</text><text x="490" y="998" fill="#2230c0">하한가</text>
              <g fill="none" stroke="#222" stroke-width="2"><path d="M7 1008h24v25H7z" /><path d="M11 1013h16v15H11zM11 1018h16M11 1023h16M16 1013v15M22 1013v15" stroke="#777" /></g>
              <text x="600" y="1047" fill="#d43c1c">최고 21,450 (12/21)</text>
              <path d="M792 1040h14M808 1031l12 9-12 9z" stroke="#d43c1c" stroke-width="2" fill="#d43c1c" />
              <text x="2842" y="1553" fill="#2a2aa8">최저 12,150 (12/11)</text>
              <path d="M3036 1546h16M3050 1538l12 8-12 8z" stroke="#1c2fd0" stroke-width="2" fill="#1c2fd0" />
              <text x="22" y="1635" fill="#3a98a8">거래량</text><text x="98" y="1635" fill="#b73fa6">단순 5</text><text x="173" y="1635" fill="#d9a92c">20</text><text x="208" y="1635" fill="#2d8a4e">60</text><text x="244" y="1635" fill="#888">120</text>
              <text x="4" y="1657" fill="#555">558,978주(83,16%)</text>
              <text x="3127" y="996" fill="#d43c1c">LC:3.29</text><text x="3127" y="1017" fill="#2b62c4">HC:-41,49</text>
              <g fill="#5c6068">
                {#each prices.slice(0, -1) as p}<text x="3140" y={p[1] + 6}>{p[0]}</text>{/each}
                <text x="3140" y="1565" clip-path="url(#below)">12,000</text>
                <text x="3140" y="1641">3,000K</text><text x="3140" y="1687">2,000K</text><text x="3140" y="1728" clip-path="url(#above)">1,000K</text>
                {#each months as m}<text x={m[1] + 2} y="1795">{m[0]}</text>{/each}
                <text x="3140" y="1795">12/11</text>
              </g>
              <rect x="3134" y="1514" width="101" height="23" fill="#1f5fbf" /><text x="3140" y="1533" fill="#fff">12,550</text><text x="3140" y="1555" fill="#2b62c4">-1,95%</text>
              <rect x="3134" y="1726" width="101" height="22" fill="#1c5bd0" /><text x="3140" y="1744" fill="#fff">558,978</text><text x="3140" y="1766" fill="#2b62c4">83,16%</text>
              <rect x="3221" y="1617" width="14" height="13" fill="#445" /><path d="M3225 1620l6 7M3231 1620l-6 7" stroke="#fff" stroke-width="2" />
            </g>
            <path d={marks} stroke="#e24a90" stroke-width="8" stroke-linecap="round" stroke-linejoin="round" fill="none" />
          </svg>
        </div>
        <div class="transport">
          <button class="start" aria-label="왼쪽"><i></i></button><span class="track"></span>
          <svg class="ctl" viewBox="0 0 650 21" fill="none" stroke="#777" stroke-width="2" aria-hidden="true">
            <path d="M1 1v20M31 1v20M63 1v20M94 1v20M124 1v20M253 4v16" stroke="#888" />
            <path d="M17 6l6 7-6 7zM47 6v14l-8-7zM55 6v14l-8-7zM73 7h11v11H73zM103 6v14l8-7zM111 6v14l8-7z" fill="#111" stroke="none" />
            <path d="M133 9h114" stroke="#888" stroke-width="5" />
            <path d="M269 4h16v14h-16zM276 10h14v9h-14M297 4h15v12h-15zM303 8h15v11h-15zM328 4h22v10M328 10l5 7 6-8 4 6M357 8h24M363 2v17M370 12l10 7M389 6h22M396 10l4 8 5-8 5 8M423 2v17h5l5-10 5 9 5-6M448 19l14-16M456 8l6 10 6-6M478 12l8-8h11v8l-8 7h-11zM508 8h12v11h-12zM514 3h14v12h-14" />
            <circle cx="548" cy="9" r="7" /><path d="M553 14l5 5" /><path d="M571 14h16M602 14h16M610 7v14M633 19l4-13h3l4 13zM631 19h14" stroke="#555" stroke-width="3" />
          </svg>
        </div>
      </section>
    </main>

    <!-- right tool rail -->
    <aside class="rail">
      <div class="grip"></div>
      {#each sideTools as t}
        <button class="rb" aria-label={t}>
          <svg viewBox="0 0 50 41" fill="none" stroke-width="2" stroke="#2a3a78">
            {#if t === 'arrow'}<path d="M8 11h22v12H15v9h20" stroke="#1d3f94" stroke-width="7" /><path d="M2 11l9-8v16z" fill="#1d3f94" />
            {:else if t === 'swap'}<path d="M4 7v28M4 8h9M4 20h9M4 33h9" stroke="#999" /><path d="M14 12h14M20 7l6 5-6 5M28 29H16M21 24l-6 5 6 5" stroke-width="3" />
            {:else if t === 'gear'}<circle cx="20" cy="20" r="10" stroke="#c89a2c" stroke-width="7" /><circle cx="20" cy="20" r="15" stroke="#c89a2c" stroke-width="4" stroke-dasharray="5 5" /><circle cx="20" cy="20" r="10" stroke="#ffe08a" stroke-width="3" />
            {:else if t === 'fx'}<path d="M2 22l8-10 8 8 8-8" stroke="#d88" /><path d="M21 17q-5-1-6 4l-3 14M11 25h9M23 25l8 9M31 25l-8 9" />
            {:else if t === 'wave'}<path d="M3 3v28h28" stroke="#999" /><path d="M4 26l10-12 6 8 12-14" stroke="#c33" stroke-width="3" /><path d="M20 27h10v9H20zM25 27v9" />
            {:else if t === 'cursor'}<path d="M2 36l8-10 8 8" stroke="#aaa" /><path d="M12 4v24l6-5 4 10 4-2-4-9h8z" fill="#1d2f74" />
            {:else if t === 'hline'}<path d="M3 34l10-12 6 8 10-16" stroke="#aaa" /><path d="M2 17h30" stroke-width="3" />
            {:else if t === 'trend'}<path d="M3 36l10-12 6 8 10-12" stroke="#aaa" /><path d="M2 26L32 8" stroke="#333" stroke-width="3" />
            {:else if t === 'auto'}<path d="M2 20L30 4M4 24l8-8 8 6" stroke="#aaa" />
            {:else if t === 'zig'}<path d="M3 24l6 4 8-16 8 18 8-8" /><path d="M3 24h1M17 12h1M25 30h1" stroke="#c33" stroke-width="4" />
            {:else if t === 'candle'}<path d="M6 8v26M19 4v32M31 8v26" /><path d="M3 14h6v12H3z" fill="#88a8e0" /><path d="M15 10h8v20h-8z" stroke="#c33" fill="#fff" /><path d="M29 14h6v12h-6z" fill="#88a8e0" />
            {:else if t === 'turn'}<path d="M7 22V9h22v6" stroke="#1d3f94" stroke-width="5" /><path d="M1 20h13l-7 8z" fill="#1d3f94" /><path d="M14 34l8-14 8 12" stroke="#aaa" />
            {:else if t === 'text'}<path d="M5 9V6h15v3M12 6v15M9 21h7" stroke-width="3" /><path d="M4 36l10-10 6 8 10-12" stroke="#aaa" />
            {:else if t === 'copy'}<path d="M8 16h14v18H8zM14 8h18v18h-10M14 8v8" stroke="#444" />
            {:else if t === 'erase' || t === 'all'}<path d="M8 20L22 6l10 8-12 14H12z" stroke="#444" fill="#f4f4f4" />
            {:else if t === 'memo'}<path d="M5 8h30v26H5zM5 14h30M5 20h30M5 26h30M14 8v26" stroke="#aaa" /><path d="M20 14h16M28 14v16" stroke-width="3" />
            {:else}<path d="M3 9h30" stroke="#c33" stroke-width="3" /><path d="M3 19h30" stroke="#333" stroke-width="3" /><path d="M3 30l8-6 6 5 8-8 6 6" stroke="#aaa" /><path d="M3 34h30" stroke="#2a72c8" stroke-width="3" />{/if}
          </svg>
          {#if t === 'auto'}<em>AUTO</em>{:else if t === 'all'}<em>ALL</em>{/if}
        </button>
      {/each}
      <div class="pens">
        <svg class="pen" viewBox="0 0 60 66"><circle cx="30" cy="33" r="30" fill="#000" /><path d="M19 12h22l6 18-12 25H25L13 30z" fill="#fff" /><circle cx="30" cy="29" r="6" fill="#000" /><path d="M30 33v24" stroke="#000" stroke-width="3" /></svg>
        <button class="pb eye" aria-label="보기"><svg viewBox="0 0 52 52"><path d="M6 27q18-24 38 0-18 22-38 0z" fill="#fff" stroke="#000" stroke-width="3" /><circle cx="25" cy="26" r="10" /><circle cx="25" cy="25" r="4" fill="#fff" /></svg></button>
        <button class="pb sel" aria-label="선택"><svg viewBox="0 0 52 52"><path d="M6 8l34 12-13 5 14 14-6 6-13-14-5 13z" fill="#fff" stroke="#000" stroke-width="3" /></svg></button>
        <button class="pb" aria-label="연필"><svg viewBox="0 0 52 52" fill="#fff" stroke="#000" stroke-width="2"><path d="M7 8h14l24 24-12 12L9 22z" /><path d="M7 18l4-6h9M12 22l10-10M18 29l11-11" fill="none" /></svg></button>
        <button class="pb" aria-label="지우개"><svg viewBox="0 0 52 52" fill="#fff" stroke="#000" stroke-width="2"><path d="M6 18L18 7l26 26-11 12z" /><path d="M6 18L16 7l6 5-11 11z" fill="#000" /></svg></button>
        <button class="pb" aria-label="굵기"><svg viewBox="0 0 52 52"><circle cx="25" cy="26" r="6" /></svg></button>
        <button class="pb" aria-label="되돌리기"><svg viewBox="0 0 52 52" fill="#fff" stroke="#000" stroke-width="2"><path d="M10 18L22 6v6q22 2 18 22-3 12-18 12 12-8 8-18-2-6-8-6v8z" /></svg></button>
        <button class="pb" aria-label="삭제"><svg viewBox="0 0 52 52" fill="#fff" stroke="#000" stroke-width="2"><path d="M10 13h34v5H10zM20 13V8h14v5M13 18h28l-3 30H16zM21 22l1 22M27 22v22M33 22l-1 22" /></svg></button>
        <button class="pb dark" aria-label="화면 캡처"><svg viewBox="0 0 52 52"><path d="M6 16h12l2-6h16v6h14v30H6z" fill="#fff" stroke="#000" stroke-width="2" /><circle cx="24" cy="30" r="11" /><circle cx="24" cy="30" r="8" fill="#fff" /><circle cx="24" cy="30" r="6" /></svg></button>
        <button class="pb dark" aria-label="메뉴"><svg viewBox="0 0 52 52"><path d="M11 8h40v36H11z" fill="#fff" /><path d="M15 15h36M15 22h36M15 29h36M15 36h36" stroke="#222" stroke-width="3" /></svg></button>
        <div class="swatch"><i class="cy"></i><i class="ye"></i><i class="ma"></i><i class="bk"></i></div>
      </div>
    </aside>
  </div>

  <div class="order">
    <b class="one">1</b>
    <span class="combo w141"><input aria-label="계좌" value="5074-7852" />{@render arrow()}</span>
    <input class="field w94" aria-label="비밀번호" />
    <span class="combo w140"><input aria-label="주문 종목" value="302550" />{@render arrow()}<button aria-label="검색">{@render ico('search')}</button></span>
    <span class="namebox w192"><em>코</em><em>40%</em><span>리메드</span><i></i></span>
    <div class="cells">
      <div class="pk"><span>보통</span><span>현재가</span><span>현100%</span></div>
      <div class="bl"><span>보통</span><span>현재가</span><span>100%</span></div>
      <div class="gr"><span>현재가</span><span>잔량전부</span></div>
      <div class="tn"><span>잔량전부</span></div>
    </div>
    <span class="tail">{@render ico('pin')}{@render ico('gear')}</span>
  </div>

  <div class="dock">
    {#each dock as d, i}<button class:on={i === 0}><b class="one">1</b>{d}</button>{/each}
    <svg class="pic" viewBox="0 0 30 24"><path d="M1 1h28v22H1z" fill="#e8f4f0" stroke="#667" stroke-width="2" /><path d="M3 21l7-9 6 5 5-7 7 11z" fill="#3a9a88" /></svg>
  </div>

  <footer class="status">
    <span class="s1">KOSPI200</span><span class="s2"><em>279.82 ▲ 0.74 0.27%</em> 61,165</span><span class="s1">KOSDAQ 종합</span><span class="s3"><em>629.13 ▲ 2.02 0.32%</em> 378,627</span>
    <span class="s4">개인 <b class="r">거</b> <em>95</em> <b class="o">코</b> <em>221</em> <b class="t">선</b> <i>702</i> <b class="v">콜</b> <em>5</em> <b class="p">풋</b> <em>25</em></span><span class="s5"></span>
  </footer>

  <div class="shade"></div>
  <button class="subscribe">구독<br />클릭</button>
</div>

<style>
  :global(body) { margin: 0; overflow: hidden; background: #000; }
  .page { position: relative; height: 100vh; overflow: hidden; display: flex; flex-direction: column; font: 21px/24px "Noto Sans CJK KR", "Liberation Sans", sans-serif; color: #1c1c1c; background: #c8c8c8; }
  .page :is(*, *::before) { box-sizing: border-box; }
  button, input, select { font: inherit; color: inherit; margin: 0; padding: 0; border: 0; background: none; border-radius: 0; min-width: 0; }
  select { appearance: none; }
  em, i { font-style: normal; }
  b { font-weight: 400; }
  a { color: inherit; text-decoration: none; }
  .up { color: #d0452a; }
  .dn { color: #2d57b8; }
  .row { display: flex; align-items: stretch; }
  .ico { width: 24px; height: 24px; display: block; flex: none; }
  .ico.big { width: 34px; height: 30px; }

  .video { height: 88px; flex: none; background: #000; display: flex; justify-content: space-between; align-items: center; padding: 14px 22px 0 4px; }
  .video h1 { margin: 0; font-size: 52px; line-height: 60px; font-weight: 300; color: #eee; white-space: nowrap; }
  .video-actions { display: flex; gap: 48px; padding-top: 4px; }
  .video-actions svg { width: 60px; height: 60px; display: block; }

  .ribbon { height: 50px; flex: none; overflow: hidden; display: flex; align-items: flex-end; background: linear-gradient(#7f8798, #a3aec6); border-bottom: 3px solid #5d626c; color: #3b4252; font-size: 22px; }
  .pill { width: 163px; height: 50px; margin: 0 23px 15px 3px; flex: none; border: 2px solid #cdd3e0; border-radius: 25px; background: #4d4c4e; display: flex; align-items: center; padding: 10px 18px 0 70px; justify-content: flex-end; gap: 8px; color: #b8b8b8; }
  .pill > i { width: 2px; height: 34px; background: #777; }
  .pill .arr { border: 0; background: none; }
  .pill .arr i { border-top-color: #b8b8b8; }
  .launch { width: 363px; flex: none; display: flex; flex-direction: column; gap: 7px; padding-bottom: 4px; }
  .tiles { display: grid; grid-template-columns: repeat(8, 1fr); justify-items: center; }
  .tiles svg { width: 36px; height: 34px; }
  .slots { display: grid; grid-template-columns: repeat(8, 1fr); border: 2px solid #8b8f98; background: #b0b2b4; height: 18px; font: 700 15px/14px "Liberation Mono", monospace; text-align: center; color: #444; }
  .slots span + span { border-left: 2px solid #989a9e; }
  .back { border: 7px solid transparent; border-right-color: #445; margin: 0 2px 24px 0; }
  .qm { width: 77px; height: 70px; flex: none; position: relative; border-left: 2px solid #b4bdd2; display: flex; flex-direction: column; align-items: center; padding-top: 3px; }
  .qm span { line-height: 31px; min-width: 42px; }
  .qm.wide { width: 90px; padding-right: 24px; }
  .qm.strong { color: #111; }
  .down { position: absolute; right: 8px; top: 32px; border: 7px solid transparent; border-top: 9px solid #3c4658; }
  .corner { position: absolute; right: 2px; bottom: 4px; border: 5px solid transparent; border-right-color: #556; border-bottom-color: #556; }
  .clock { margin-left: auto; width: 131px; height: 70px; flex: none; padding-left: 16px; border-left: 2px solid #c0c8d8; white-space: nowrap; padding-top: 3px; }
  .clock span { display: flex; gap: 16px; align-items: center; height: 31px; }

  .desk { flex: none; display: grid; grid-template-columns: minmax(0, 1fr) 39px; background: #4b4d56; }
  .work { min-width: 0; }
  .top-windows { display: grid; grid-template-columns: 1064fr 1246fr 933fr; gap: 8px; padding-right: 8px; height: 700px; overflow: hidden; }
  .win { min-width: 0; display: flex; flex-direction: column; background: #d9d9d9; }
  .top-windows .win { height: 692px; border: 0 solid #a4a6a8; border-width: 0 4px 7px 4px; }
  .top-windows .win:first-child { border-left: 0; }
  .top-windows .win:last-child { height: 720px; }
  .caption { height: 43px; flex: none; display: flex; align-items: center; gap: 6px; padding: 0 6px; background: linear-gradient(#808486, #95989a); color: #eee; font-size: 24px; font-weight: 300; white-space: nowrap; overflow: hidden; }
  .top-windows .caption { margin: 0 -4px; }
  .active .caption { background: #3c588f; }
  .active.win { border-color: #b4b6b8; }
  .caption.first { padding-left: 0; }
  .caption.first .one { width: 6px; }
  .one { width: 24px; height: 27px; flex: none; border: 2px solid #dde; border-radius: 5px; background: #4a6dab; color: #fff; font: 700 20px/22px "Liberation Serif", serif; text-align: center; }
  .frame-icons { margin-left: auto; display: flex; gap: 9px; align-items: center; color: #c8cacc; padding-right: 4px; }
  .frame-icons .ico { width: 23px; height: 23px; }
  .frame-icons .bar { width: 2px; height: 22px; background: #bbb; }

  .btn { border: 2px solid #a2a2a2; background: #ededed; height: 34px; display: flex; align-items: center; justify-content: center; white-space: nowrap; flex: none; color: #222; }
  .btn.blue, .seg .on { background: #4a7ec4; color: #fff; }
  .btn.white { background: #f8f8f8; }
  .btn.dim, .dim { color: #888; }
  .field { border: 2px solid #a2a2a2; background: #fff; height: 34px; text-align: center; }
  .combo { display: flex; height: 34px; border: 2px solid #a2a2a2; background: #fff; flex: none; }
  .combo select, .combo input { flex: 1; padding-left: 4px; width: 0; }
  .combo button { flex: none; min-width: 32px; display: flex; align-items: center; justify-content: center; border-left: 2px solid #b5b5b5; background: #f2f2f2; color: #777; }
  .combo button:first-child { flex: 1; border: 0; color: #444; }
  .arr { width: 24px; flex: none; display: flex; align-items: center; justify-content: center; border-left: 2px solid #b5b5b5; background: #f4f4f4; }
  .arr i { border: 6px solid transparent; border-top: 9px solid #666; border-bottom: 0; }
  .seg { display: flex; height: 34px; border: 2px solid #a2a2a2; background: #ededed; }
  .seg button { width: 33px; display: flex; align-items: center; justify-content: center; }
  .seg button + button { border-left: 2px solid #b5b5b5; }
  .nav i { border: 7px solid transparent; }
  .nav.prev i { border-right-color: #444; margin-right: 7px; }
  .nav.next i { border-left-color: #444; margin-left: 7px; }
  .nav.off i { border-right-color: #bbb; }
  .scroll { background: #f0f0f0; display: flex; flex-direction: column; align-items: center; justify-content: space-between; }
  .scroll::before, .scroll::after { content: ""; width: 9px; height: 9px; border: solid #555; border-width: 3px 0 0 3px; transform: rotate(45deg); flex: none; margin: 12px 0 6px; }
  .scroll::after { transform: rotate(225deg); margin: 6px 0 12px; }
  .scroll b { width: 100%; background: #cbcbcb; margin-bottom: auto; }

  .watch { flex: 1; min-height: 0; display: grid; grid-template-columns: 268px 26px minmax(0, 1fr); background: #fff; }
  .tree { list-style: none; margin: 0; padding: 0 0 8px 8px; display: flex; flex-direction: column; min-height: 0; color: #222; }
  .tree li { flex: 1; min-height: 0; line-height: 20px; display: flex; align-items: center; position: relative; }
  .tree li::before { content: ""; position: absolute; left: -8px; top: 12px; width: 4px; border-top: 2px dotted #999; }
  .tree .child { padding-left: 20px; }
  .tree .child::before { left: 8px; top: 0; width: 10px; height: 13px; border: dotted #999; border-width: 0 0 2px 2px; }
  .tree a.sel { background: #2b7bd0; color: #fff; padding: 0 4px; }
  .tree-scroll b { height: 322px; }
  .watch-main { border-left: 2px solid #999; margin-left: 5px; background: #d9d9d9; padding: 7px 3px 5px 11px; display: flex; flex-direction: column; min-height: 0; }
  .tools1 { gap: 3px; padding-bottom: 9px; }
  .tools1 > .btn { width: 60px; }
  .tools1 > .btn:first-child, .tools1 > .btn:last-child { width: 34px; }
  .tools1 .field { width: 36px; }
  .tools1 .combo { width: 163px; }
  .tools1 .sq { width: 48px; justify-content: space-between; padding-left: 8px; }
  .tools1 .sq > i { width: 11px; height: 13px; background: #777; }
  .tools1 .sq .arr { width: 18px; height: 30px; }
  .tools1 .white { width: 95px; }
  .chk { display: flex; align-items: center; gap: 3px; width: 70px; }
  .chk input { appearance: none; width: 22px; height: 24px; background: #fff; border: 2px solid #aaa; }
  .tools2 { gap: 3px; padding-bottom: 5px; border-bottom: 2px solid #aaa; margin-bottom: 4px; }
  .tools2 .btn { width: 60px; }
  .tools2 > i { flex: 1; }
  .tools2 .nav { width: 35px; }
  .tbl-box { flex: 1; min-height: 0; display: flex; border: 2px solid #a0a0a0; background: #fff; position: relative; }
  table { border-collapse: collapse; table-layout: fixed; flex: 1; height: 100%; white-space: nowrap; }
  th { font-weight: 400; background: #dde3ee; height: 31px; padding: 0; overflow: hidden; }
  td { text-align: right; padding: 0 3px; line-height: 24px; height: 30px; }
  th + th, td + td { border-left: 2px solid #d2d2d2; }
  .wt th { height: 29px; }
  .odd { background: #ececec; }
  .hot { background: #c7d7e8; }
  .green { color: #2e9a3c; }
  .wt th:nth-child(1) { width: 31px; } .wt th:nth-child(2) { width: 32px; } .wt th:nth-child(3) { width: 113px; } .wt th:nth-child(4) { width: 95px; }
  .wt th:nth-child(5) { width: 105px; } .wt th:nth-child(6) { width: 84px; } .wt th:nth-child(7) { width: 126px; } .wt th:nth-child(8) { width: 125px; }
  .mini svg { height: 26px; width: 60px; display: block; margin: 0 auto; }
  .w-scroll { width: 28px; }
  .w-scroll b { height: 254px; }
  .tri { display: inline-block; width: 0; height: 0; border: 8px solid transparent; flex: none; }
  .tri.u { border-bottom: 15px solid #d8401c; border-top: 0; }
  .tri.d { border-top: 15px solid #1f55c0; border-bottom: 0; }
  td .tri { float: left; margin: 5px 0 0 1px; }

  .rank { flex: 1; min-height: 0; display: flex; flex-direction: column; padding: 8px 3px 4px 3px; }
  .tabs { height: 36px; flex: none; display: grid; grid-template-columns: 217px 214px 214px 150px 150px 151px 1fr; position: relative; border-bottom: 2px solid #7c9cc4; color: #777; overflow: hidden; }
  .tabs > button { border: 2px solid #aaa; border-width: 2px 0 0 2px; background: #d6d6d6; overflow: hidden; white-space: nowrap; }
  .tabs .on { background: #e6e9ed; border: 2px solid #5f8cc4; border-bottom: 0; color: #111; }
  .tabs > button:nth-child(7) { text-align: left; padding-left: 12px; }
  .pager { position: absolute; right: 0; top: 2px; display: flex; }
  .pager .btn { width: 25px; height: 26px; }
  .radios { padding: 4px 1px 0 3px; gap: 4px; }
  .radios > i { flex: 1; }
  .radios .btn { width: 60px; }
  fieldset { margin: 0; border: 2px solid #b2b2b2; background: #f4f4f4; height: 34px; padding: 0 5px; display: flex; align-items: center; justify-content: space-between; width: 268px; min-width: 0; }
  fieldset:nth-of-type(2) { width: 355px; }
  fieldset:nth-of-type(3) { width: 438px; padding-right: 14px; }
  fieldset label { display: flex; align-items: center; gap: 2px; white-space: nowrap; }
  fieldset .off { color: #999; }
  input[type='radio'] { appearance: none; width: 21px; height: 21px; border: 2px solid #777; border-radius: 50%; background: #fff; }
  input[type='radio']:checked { background: radial-gradient(circle, #444 5px, #fff 6px); }
  .off input[type='radio'] { border-color: #bbb; }
  .off input[type='radio']:checked { background: radial-gradient(circle, #aaa 5px, #fff 6px); }
  .selects { padding: 5px 0 4px 3px; border-bottom: 2px solid #aaa; margin-bottom: 4px; justify-content: space-between; align-items: center; color: #444; font-size: 22px; }
  .selects .combo { width: 156px; color: #222; }
  .selects .combo:nth-of-type(3) { width: 142px; } .selects .combo:nth-of-type(4) { width: 152px; } .selects .combo:nth-of-type(5) { width: 142px; }
  .rbox { margin: 0 0 0 1px; }
  .rt th:nth-child(1) { width: 53px; } .rt th:nth-child(2) { width: 182px; } .rt th:nth-child(3) { width: 148px; } .rt th:nth-child(4) { width: 138px; } .rt th:nth-child(5) { width: 88px; }
  .rt th:nth-child(6) { width: 161px; text-align: right; } .rt th:nth-child(7) { width: 135px; } .rt th:nth-child(8) { width: 178px; } .rt th:nth-child(9) { width: 113px; }
  .rt th em { margin-left: 12px; color: #888; }
  .rt .name { text-align: left; overflow: hidden; }
  .rt .cur { background: #d3e7f3; }
  .r-scroll { width: 28px; }
  .r-scroll b { height: 45px; }
  .pointer { position: absolute; left: 122px; top: 102px; width: 24px; height: 34px; }

  .book { flex: 1; min-height: 0; display: flex; flex-direction: column; background: #d9d9d9; border: 0 solid #e8e8e8; border-width: 0 6px; padding: 5px 7px 0 5px; }
  .btools { gap: 3px; padding-bottom: 4px; border-bottom: 2px solid #aaa; }
  .btools .combo:first-child { width: 232px; }
  .spk { width: 92px; margin-left: 2px; }
  .btools .namebox { flex: 1; margin: 0 4px 0 3px; }
  .btools .btn { width: 56px; }
  .gearb .ico { width: 30px; height: 28px; color: #555; }
  .namebox { display: flex; align-items: center; height: 34px; border: 2px solid #a2a2a2; background: #fff; color: #862a56; position: relative; flex: none; }
  .namebox b { background: #24716f; color: #fff; width: 47px; height: 30px; line-height: 28px; text-align: center; }
  .namebox em { background: #d4d4d4; color: #222; height: 30px; line-height: 28px; padding: 0 3px; }
  .btools .namebox em { width: 86px; text-align: center; }
  .namebox span { padding-left: 5px; }
  .namebox i { position: absolute; right: 1px; bottom: 1px; border: 6px solid transparent; border-right-color: #999; border-bottom-color: #999; }
  .hoga { margin-top: 7px; border: 2px solid #aaa; background: #fbfcfe; flex: 1; }
  .h1, .h2 { display: grid; text-align: right; height: 26px; line-height: 24px; border-bottom: 2px solid #aaa; }
  .h1 { grid-template-columns: 199px 32px 166px 154px 195px 1fr; align-items: center; }
  .h1 b { font-weight: 700; }
  .h1 .tri { justify-self: end; }
  .h1 .blk { color: #222; }
  .l { text-align: left; padding-left: 6px; }
  .h2 { grid-template-columns: 178px 184px 184px 200px 1fr; height: 27px; }
  .h2 span { padding-right: 3px; border-right: 2px solid #d0d0d0; }
  .h2 span:first-child { text-align: center; background: #f0f0f0; }
  .h2 .ba { background: #dfe9ef; }
  .h2 .bb { background: #fadfd4; }
  .asks { display: grid; grid-template-columns: 178fr 178fr 183fr 22fr 291fr 47fr; height: 298px; border-bottom: 2px solid #aaa; }
  .c { display: flex; flex-direction: column; min-width: 0; min-height: 0; text-align: right; border-right: 2px solid #d0d0d0; }
  .c > span { flex: 1; min-height: 0; position: relative; padding-right: 3px; }
  .c .mid { border-top: 2px solid #cdcdcd; }
  .qty, .bq { border: 0; }
  .qty i { position: absolute; right: 0; top: 1px; bottom: 3px; background: #dfe6f6; }
  .qty em, .bq em { position: relative; }
  .asks .prc { background: linear-gradient(#cfe1e8 0 44%, #e6f0f6 54%, #fff); }
  .bar svg { width: 100%; height: 298px; }
  .inf b { display: inline-block; width: 199px; }
  .inf em { display: inline-block; width: 88px; text-align: left; padding-left: 8px; }
  .i1 { height: 212px; display: flex; flex-direction: column; border-bottom: 2px solid #ccc; }
  .i2 { flex: 1; display: flex; flex-direction: column; }
  .i1 span, .i2 span { flex: 1; min-height: 0; }
  .i1 .ks { text-align: center; }
  .i2 .last { display: flex; align-items: center; padding-left: 10px; }
  .i2 .last em { width: 60px; padding-left: 12px; }
  .i2 .last b { width: 144px; }
  .side { border: 0; background: #ececec; }
  .side button { flex: 1; border: 2px solid #b4b4b4; border-width: 0 0 2px 0; }
  .bids { display: grid; grid-template-columns: 329fr 27fr 183fr 360fr; height: 249px; }
  .tk > span { display: flex; align-items: center; padding: 0 4px 0 0; }
  .tk b { width: 151px; }
  .tk i { width: 22px; height: 100%; margin-left: 3px; border: solid #ccc; border-width: 0 2px; background: repeating-linear-gradient(#fff 0 5px, #ccc 5px 7px); }
  .tk i.fill { background: repeating-linear-gradient(#74b4ea 0 5px, #4f94d4 5px 7px); }
  .tk em { margin-left: auto; }
  .b-scroll b { height: 124px; }
  .b-scroll::after { visibility: hidden; }
  .bids .prc { background: linear-gradient(#fff, #fbe6dd 55%, #f8d2c2); }
  .now { outline: 2px solid #d0452a; background: #fff; }
  .bq { background: linear-gradient(90deg, transparent 178px, #ccc 178px 180px, transparent 180px); }
  .bq i { position: absolute; left: 0; top: 2px; bottom: 3px; background: #f9e5de; }
  .bq em { display: block; width: 176px; }

  .chart { margin-right: 15px; background: #d9d9d9; font-size: 22px; }
  .chart .caption { height: 46px; background: linear-gradient(#96999c, #a2a4a6); padding: 0 12px 0 0; }
  .one.cut { width: 16px; border-left: 0; border-radius: 0 5px 5px 0; }
  .ctools { padding: 9px 0 7px; gap: 3px; align-items: center; font-size: 21px; }
  .w28 { width: 28px; border-left: 0; } .w56 { width: 56px; } .w34 { width: 34px; } .w153 { width: 153px; } .w48 { width: 48px; } .w142 { width: 142px; }
  .w66 { width: 66px; } .w50 { width: 50px; } .w94 { width: 94px; } .w141 { width: 141px; } .w140 { width: 140px; } .w192 { width: 192px; }
  .ctools .w48 button { min-width: 24px; }
  .ctools .w48 .ico { width: 20px; }
  .ctools .w48 .arr { width: 18px; }
  .date { width: 146px; }
  .ctools .date input { padding: 0; text-align: center; }
  .ctools .date button { min-width: 28px; }
  .dim.seg { background: #f2f2f2; }
  .ctools .dim, .ctools .dim button { color: #888; background: #f2f2f2; }
  .dim .arr i { border-top-color: #aaa; }
  .total { width: 57px; color: #666; }
  .picts { color: #666; }
  .quote { gap: 3px; height: 34px; font-size: 21px; }
  .strip { width: 1308px; border: 2px solid #b4b4b4; border-left: 0; background: #f1f1f1; display: flex; align-items: center; }
  .strip b { text-align: right; white-space: nowrap; }
  .strip .tri { margin: 0 4px 0 6px; border-width: 15px 9px 0; }
  .strip .sp { width: 2px; height: 30px; background: #ccc; margin: 0 4px 0 2px; flex: none; }
  .strip .gap { margin-left: 8px; }
  .strip > * { flex: none; }
  .q1 { width: 102px; } .q2 { width: 81px; } .q3 { width: 83px; } .q4 { width: 116px; } .q5 { width: 101px; } .q6 { width: 73px; } .q7 { width: 136px; }
  .q8 { width: 84px; } .q9 { width: 87px; } .q10 { width: 76px; margin-right: 10px; }
  .btn.buy { width: 70px; background: #f6d3c8; } .btn.sell { width: 70px; background: #cfe0f2; }
  .plot-box { margin-top: 7px; padding-right: 11px; }
  .plot { display: block; width: 100%; height: auto; }
  .ct { font-size: 21px; }
  .transport { height: 23px; overflow: hidden; display: flex; align-items: center; background: #dedede; }
  .start { width: 24px; height: 22px; border-right: 2px solid #888; }
  .start i { display: block; border: 7px solid transparent; border-right-color: #111; border-left: 0; margin-left: 5px; width: 7px; }
  .track { flex: 1; height: 22px; background: #e4e4e4; }
  .ctl { width: 650px; height: 21px; margin-right: 12px; }

  .rail { background: #efefef; overflow: hidden; position: relative; display: flex; flex-direction: column; }
  .grip { height: 15px; flex: none; margin: 0 0 0 8px; background: radial-gradient(circle, #999 2px, transparent 2px) 0 0 / 8px 6px repeat-x; }
  .rb { width: 52px; height: 42px; flex: none; margin: 0 0 10px 10px; border: 2px solid #aaa; background: #f4f4f4; position: relative; overflow: hidden; }
  .rb svg { width: 48px; height: 38px; display: block; }
  .rb em { position: absolute; left: 2px; bottom: 0; font: 700 14px/14px "Liberation Sans", sans-serif; color: #24356e; }
  .pens { flex: 1; background: #fff; width: 62px; padding-top: 79px; border-top: 2px solid #bbb; display: flex; flex-direction: column; }
  .pen { width: 60px; height: 66px; margin-bottom: 10px; display: block; flex: none; }
  .pb { height: 53px; flex: none; border-left: 3px solid #000; display: block; }
  .pb svg { width: 52px; height: 52px; display: block; }
  .eye { background: #3a8fd0; border-top: 3px solid #000; }
  .sel.pb { background: #f2c63c; }
  .dark { background: #4a4a4a; }
  .swatch { flex: 1; display: grid; grid-template-columns: 27px 1fr; grid-template-rows: 27px 27px 1fr; background: #e04090; border: 3px solid #000; border-right: 0; }
  .cy { background: #3f9fe0; } .ye { background: #f2de3c; } .bk { background: #000; } .ma { background: none; }

  .order { height: 48px; flex: none; display: flex; align-items: center; gap: 4px; background: linear-gradient(#e8e8e8 0 3px, #d6d6d6 3px); color: #111; }
  .order .one, .dock .one { border: 0; background: #4a69a8; width: 24px; height: 25px; line-height: 25px; }
  .order .combo, .order .field, .order .namebox { height: 34px; }
  .namebox em + em { border-left: 2px solid #bbb; }
  .cells { flex: 1; display: grid; grid-template-columns: 521px 523px 522px 524px; height: 42px; margin-left: 2px; font-size: 22px; }
  .cells > div { display: flex; gap: 24px; padding: 4px 8px; line-height: 26px; }
  .cells span:nth-child(3) { padding-left: 6px; }
  .pk { background: #f2d0c6; } .bl { background: #c3d8ee; } .gr { background: #dce0c0; } .tn { background: #eadcc0; }
  .cells > .gr { padding-left: 56px; gap: 28px; } .cells > .tn { padding-left: 126px; }
  .tail { display: flex; gap: 16px; margin-right: -8px; color: #555; }
  .dock { height: 51px; flex: none; display: flex; background: linear-gradient(#e6e6e6 0 2px, #d3d3d3 2px); position: relative; font-size: 22px; color: #333; border-bottom: 2px solid #b8c0cc; }
  .dock button { width: 191px; border-left: 2px solid #e6e6e6; display: flex; align-items: center; gap: 11px; white-space: nowrap; padding: 0 0 1px 4px; text-align: left; }
  .dock button:first-child { width: 186px; padding-left: 2px; border: 0; }
  .dock button.on { background: #bcbcbc; }
  .dock button:last-of-type { width: 260px; }
  .pic { width: 30px; height: 24px; margin: 11px -18px 0 auto; }
  .status { flex: 1; min-height: 0; overflow: hidden; display: grid; grid-template-columns: 130px 530px 130px 1844px 528px 1fr; background: #b4c4e4; color: #445; line-height: 26px; white-space: nowrap; }
  .status span { padding-left: 10px; height: 28px; }
  .s1 { background: #a4b4dc; }
  .status em { color: #d0452a; }
  .s4 { display: flex; justify-content: space-between; color: #111; background: #c4d0e8; }
  .s4 b { color: #fff; width: 20px; } .s4 i { color: #2d57b8; }
  .r { background: #d43c2c; } .o { background: #e08c2c; } .t { background: #2c9a80; } .v { background: #6c80b8; } .p { background: #d84890; }
  .s5 { background: #d8784c; }

  .shade { position: absolute; left: 0; right: 0; bottom: 0; height: 680px; pointer-events: none; background: linear-gradient(transparent, rgba(0, 0, 0, 0.12) 45%, rgba(0, 0, 0, 0.25)); }
  .subscribe { position: absolute; right: 23px; bottom: -5px; width: 78px; height: 78px; border-radius: 50%; background: #4d97cc; color: #fff; font-size: 29px; line-height: 28px; font-weight: 700; }
</style>
